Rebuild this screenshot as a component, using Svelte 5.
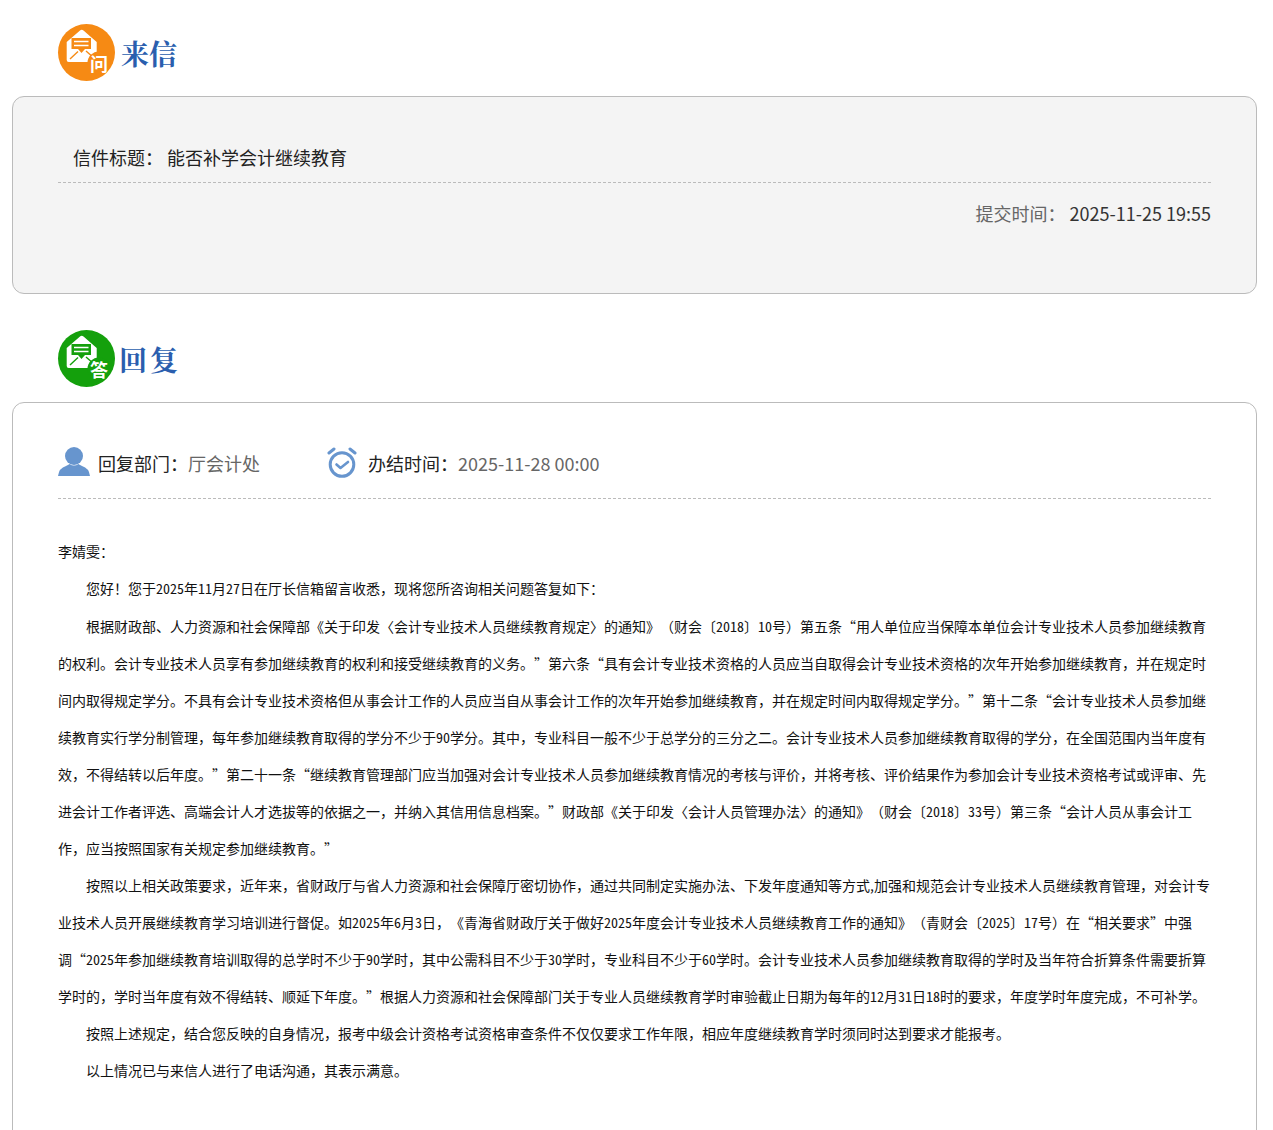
<script>
  const paragraphs = [
    '您好！您于2025年11月27日在厅长信箱留言收悉，现将您所咨询相关问题答复如下：',
    '根据财政部、人力资源和社会保障部《关于印发〈会计专业技术人员继续教育规定〉的通知》（财会〔2018〕10号）第五条“用人单位应当保障本单位会计专业技术人员参加继续教育的权利。会计专业技术人员享有参加继续教育的权利和接受继续教育的义务。”第六条“具有会计专业技术资格的人员应当自取得会计专业技术资格的次年开始参加继续教育，并在规定时间内取得规定学分。不具有会计专业技术资格但从事会计工作的人员应当自从事会计工作的次年开始参加继续教育，并在规定时间内取得规定学分。”第十二条“会计专业技术人员参加继续教育实行学分制管理，每年参加继续教育取得的学分不少于90学分。其中，专业科目一般不少于总学分的三分之二。会计专业技术人员参加继续教育取得的学分，在全国范围内当年度有效，不得结转以后年度。”第二十一条“继续教育管理部门应当加强对会计专业技术人员参加继续教育情况的考核与评价，并将考核、评价结果作为参加会计专业技术资格考试或评审、先进会计工作者评选、高端会计人才选拔等的依据之一，并纳入其信用信息档案。”财政部《关于印发〈会计人员管理办法〉的通知》（财会〔2018〕33号）第三条“会计人员从事会计工作，应当按照国家有关规定参加继续教育。”',
    '按照以上相关政策要求，近年来，省财政厅与省人力资源和社会保障厅密切协作，通过共同制定实施办法、下发年度通知等方式,加强和规范会计专业技术人员继续教育管理，对会计专业技术人员开展继续教育学习培训进行督促。如2025年6月3日，《青海省财政厅关于做好2025年度会计专业技术人员继续教育工作的通知》（青财会〔2025〕17号）在“相关要求”中强调“2025年参加继续教育培训取得的总学时不少于90学时，其中公需科目不少于30学时，专业科目不少于60学时。会计专业技术人员参加继续教育取得的学时及当年符合折算条件需要折算学时的，学时当年度有效不得结转、顺延下年度。”根据人力资源和社会保障部门关于专业人员继续教育学时审验截止日期为每年的12月31日18时的要求，年度学时年度完成，不可补学。',
    '按照上述规定，结合您反映的自身情况，报考中级会计资格考试资格审查条件不仅仅要求工作年限，相应年度继续教育学时须同时达到要求才能报考。',
    '以上情况已与来信人进行了电话沟通，其表示满意。'
  ];

  // digits run at half width in the letter body, so split them out
  const pieces = (text) => text.split(/(\d+)/);
</script>

{#snippet envelope()}
  <svg class="env" viewBox="0 0 57 57" aria-hidden="true">
    <path d="M8.7 18 L22 6.5 Q23.7 5 25.5 6.5 L38.7 18 V30 L30 38 H10.7 Q8.7 38 8.7 36 Z" fill="#fff" />
    <path d="M12 35 L20 27.5 M28 27 L36 34" fill="none" stroke="var(--tone)" stroke-width="1.4" />
    <path d="M13.5 14 H33 V25 H27 L23.5 29 L20 25 H13.5 Z" fill="var(--tone)" />
    <path d="M16 17.5 H30.5 M16 21.5 H30.5" stroke="#fff" stroke-width="1.7" />
    <circle cx="41" cy="39" r="11.5" fill="var(--tone)" />
  </svg>
{/snippet}

<div class="page">
  <div class="head">
    <div class="badge orange">
      {@render envelope()}
      <span class="badge-char">问</span>
    </div>
    <h2>来信</h2>
  </div>

  <section class="card grey">
    <div class="title-row">信件标题：&nbsp;能否补学会计继续教育</div>
    <div class="time-row"><span class="muted">提交时间：</span>&nbsp;2025-11-25 19:55</div>
  </section>

  <div class="head second">
    <div class="badge green">
      {@render envelope()}
      <span class="badge-char">答</span>
    </div>
    <h2 class="huifu">回复</h2>
  </div>

  <section class="card reply">
    <div class="meta">
      <div class="meta-item dept">
        <svg class="person" width="32" height="30" viewBox="0 0 32 30" aria-hidden="true">
          <circle cx="16" cy="9" r="9" fill="#6795ce" />
          <path d="M0 29 Q1 21 8 19 Q11 17.5 11.5 17 Q16 20 20.5 17 Q21 17.5 24 19 Q31 21 32 29 Z" fill="#6795ce" />
        </svg>
        <span class="label">回复部门：</span><span class="value">厅会计处</span>
      </div>
      <div class="meta-item clock">
        <svg width="30" height="32" viewBox="0 0 30 32" aria-hidden="true">
          <circle cx="15" cy="17.5" r="11.8" fill="none" stroke="#6795ce" stroke-width="3" />
          <path d="M2 6 L7 2 M28 6 L23 2" stroke="#6795ce" stroke-width="3" stroke-linecap="round" />
          <path d="M9.5 17.5 L13.5 21 L21 15" fill="none" stroke="#6795ce" stroke-width="2.6" stroke-linecap="round" stroke-linejoin="round" />
        </svg>
        <span class="label">办结时间：</span><span class="value">2025-11-28 00:00</span>
      </div>
    </div>

    <div class="content">
      <p class="salute">李婧雯：</p>
      {#each paragraphs as text, n}
        <p class="para" class:greeting={n === 0}>{#each pieces(text) as piece, i}{#if i % 2}<span class="num">{piece}</span>{:else}{piece}{/if}{/each}</p>
      {/each}
    </div>
  </section>
</div>

<style>
  :global(body) {
    margin: 0;
    background: #fff;
    font-family: "Noto Sans CJK SC", "Noto Sans", sans-serif;
  }
  .page {
    height: 1130px;
    overflow: hidden;
    padding: 24px 16px 0 12px;
    box-sizing: border-box;
  }
  .head {
    display: flex;
    align-items: center;
    gap: 6px;
    height: 57px;
    margin-left: 46px;
  }
  .head.second {
    margin-top: 36px;
    gap: 4px;
  }
  .badge {
    position: relative;
    width: 57px;
    height: 57px;
    border-radius: 50%;
    flex: none;
  }
  .badge.orange { background: #f68a14; --tone: #f68a14; }
  .badge.green { background: #14a00c; --tone: #14a00c; }
  .env {
    display: block;
    width: 57px;
    height: 57px;
  }
  .badge-char {
    position: absolute;
    left: 32px;
    top: 29px;
    color: #fff;
    font-size: 18px;
    line-height: 20px;
    font-weight: 700;
  }
  h2 {
    margin: 0;
    font-family: "Noto Serif CJK SC", "Noto Sans CJK SC", serif;
    font-size: 28px;
    font-weight: 700;
    color: #2a5eae;
  }
  .huifu { letter-spacing: 3px; }
  .card {
    border: 1px solid #bbb;
    border-radius: 12px;
    margin-top: 15px;
    padding: 0 45px;
    box-sizing: border-box;
  }
  .grey {
    background: #f4f4f4;
    height: 198px;
  }
  .title-row {
    margin-top: 42px;
    padding: 0 15px 7px;
    font-size: 18px;
    line-height: 36px;
    color: #222;
    border-bottom: 1px dashed #bbb;
  }
  .time-row {
    margin-top: 12px;
    text-align: right;
    font-size: 18px;
    line-height: 36px;
    color: #333;
  }
  .muted { color: #666; }
  .reply {
    min-height: 800px;
    padding-top: 42px;
  }
  .meta {
    display: flex;
    align-items: flex-start;
    height: 53px;
    border-bottom: 1px dashed #bbb;
    font-size: 18px;
  }
  .meta-item {
    display: flex;
    align-items: center;
    height: 36px;
  }
  .meta-item svg { margin-right: 8px; flex: none; }
  .person { margin-bottom: 2px; }
  .clock svg { margin-right: 11px; }
  .dept { width: 269px; }
  .label { color: #222; }
  .value { color: #666; }
  .content {
    margin-top: 34.2px;
    font-size: 14px;
    line-height: 37.05px;
    color: #111;
    text-spacing-trim: space-all;
    font-kerning: none;
  }
  .content p { margin: 0; }
  .content p.greeting { margin-bottom: 0.4px; }
  .para { text-indent: 28px; }
  .num { font-feature-settings: "hwid"; }
</style>
